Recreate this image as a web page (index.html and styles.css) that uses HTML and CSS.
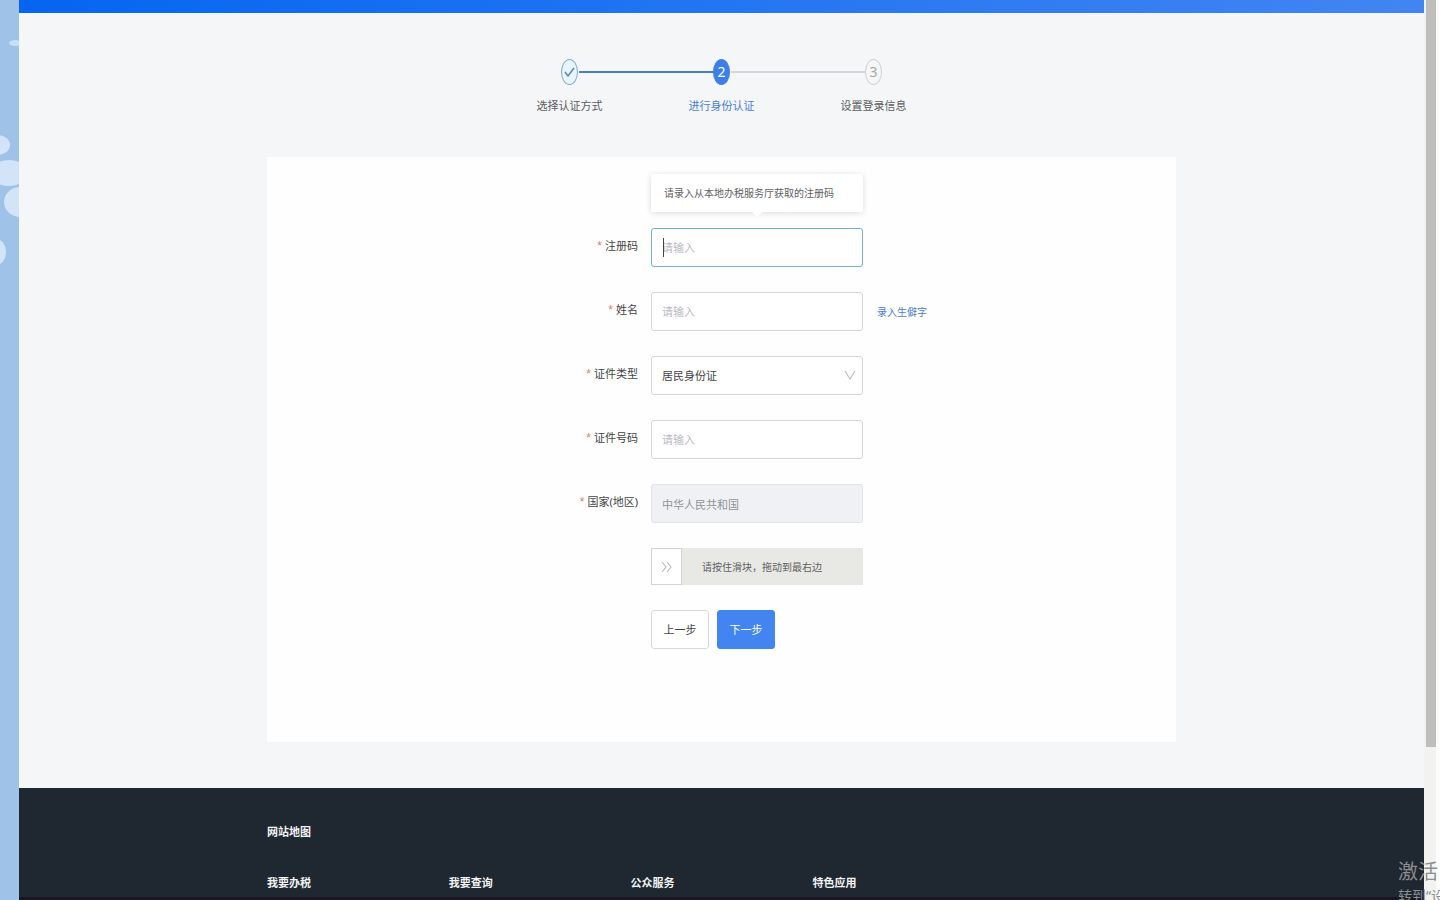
FILE: index.html
```html
<!DOCTYPE html>
<html lang="zh-CN">
<head>
<meta charset="utf-8">
<title>进行身份认证</title>
<link rel="stylesheet" href="styles.css">
</head>
<body>
<div class="shell">
  <aside class="desktop" aria-hidden="true">
    <svg class="petals" width="19" height="290" viewBox="0 0 19 290">
      <ellipse cx="15" cy="43" rx="6" ry="3" fill="#c6e1f7"/>
      <g fill="#d3e4f8">
        <ellipse cx="-2" cy="145" rx="12" ry="10"/>
        <ellipse cx="9" cy="173" rx="19" ry="13"/>
        <ellipse cx="20" cy="202" rx="16" ry="15"/>
        <ellipse cx="-4" cy="252" rx="10" ry="13"/>
      </g>
    </svg>
  </aside>

  <div class="page">
    <header class="topbar"></header>
    <main class="main">
      <ol class="steps">
        <li class="step done">
          <span class="dot"><svg width="11" height="14" viewBox="0 0 11 14"><path d="M1 7l3 4 6-8" fill="none" stroke="#5c86c0" stroke-width="1.6"/></svg></span>
          <span class="step-name">选择认证方式</span>
        </li>
        <li class="step current">
          <span class="dot">2</span>
          <span class="step-name">进行身份认证</span>
        </li>
        <li class="step">
          <span class="dot">3</span>
          <span class="step-name">设置登录信息</span>
        </li>
      </ol>

      <form class="card">
        <div class="row">
          <label class="label" for="code">注册码</label>
          <div class="field focused">
            <input class="control" id="code" type="text" placeholder="请输入">
            <div class="tip" role="tooltip">请录入从本地办税服务厅获取的注册码</div>
          </div>
        </div>
        <div class="row">
          <label class="label" for="name">姓名</label>
          <div class="field"><input class="control" id="name" type="text" placeholder="请输入"></div>
          <a class="rare" href="#">录入生僻字</a>
        </div>
        <div class="row">
          <label class="label" for="type">证件类型</label>
          <div class="field">
            <select class="control" id="type"><option>居民身份证</option></select>
            <svg class="chevron" width="12" height="10" viewBox="0 0 12 10"><path d="M1 1l5 8 5-8" fill="none" stroke="#c4c4c6" stroke-width="1.3"/></svg>
          </div>
        </div>
        <div class="row">
          <label class="label" for="number">证件号码</label>
          <div class="field"><input class="control" id="number" type="text" placeholder="请输入"></div>
        </div>
        <div class="row">
          <label class="label" for="country">国家(地区)</label>
          <div class="field"><input class="control" id="country" type="text" value="中华人民共和国" disabled></div>
        </div>
        <div class="row">
          <div class="slider">
            <button class="handle" type="button" aria-label="滑块"><svg width="12" height="14" viewBox="0 0 12 14"><path d="M1 2l4 5-4 5M6 2l4 5-4 5" fill="none" stroke="#b9b9b9" stroke-width="1.1"/></svg></button>
            <span class="slider-text">请按住滑块，拖动到最右边</span>
          </div>
        </div>
        <div class="row">
          <div class="actions">
            <button class="btn" type="button">上一步</button>
            <button class="btn primary" type="submit">下一步</button>
          </div>
        </div>
      </form>
    </main>

    <footer class="footer">
      <div class="sitemap">
        <h2 class="heading">网站地图</h2>
        <nav class="links">
          <h3 class="heading">我要办税</h3>
          <h3 class="heading">我要查询</h3>
          <h3 class="heading">公众服务</h3>
          <h3 class="heading">特色应用</h3>
        </nav>
      </div>
    </footer>
  </div>

  <div class="scrollbar" aria-hidden="true"><div class="thumb"></div></div>
  <div class="watermark"><p class="wm-title">激活</p><p class="wm-note">转到“设</p></div>
</div>
</body>
</html>
```
FILE: styles.css
```css
* { box-sizing: border-box; }

body {
  margin: 0;
  font-family: "Noto Sans", "Noto Sans CJK SC", sans-serif;
  font-size: 11px;
  line-height: 16px;
  color: #444;
}

button, input, select { font: inherit; color: inherit; }

.shell {
  position: relative;
  display: flex;
  height: 100vh;
  overflow: hidden;
}

.desktop { flex: 0 0 19px; background: #9fc2e8; overflow: hidden; }
.petals { display: block; }

.page { flex: 1; display: flex; flex-direction: column; background: #f4f6f8; }

.topbar {
  flex: 0 0 13px;
  background: linear-gradient(90deg, #0565f1, #4285f2);
}

.main {
  display: flex;
  flex-direction: column;
  align-items: center;
  padding: 46px 24px;
}

/* Progress steps */
.steps { display: flex; margin: 0 0 43px; padding: 0; list-style: none; }

.step {
  position: relative;
  display: flex;
  flex-direction: column;
  align-items: center;
  gap: 13px;
  width: 152px;
}

.step + .step::before {
  content: "";
  position: absolute;
  top: 12px;
  right: 84px;
  width: 135px;
  height: 2px;
  background: #d2d4da;
}

.step.current::before { background: #4a7fcb; }

.dot {
  display: flex;
  align-items: center;
  justify-content: center;
  width: 17px;
  height: 26px;
  border: 1px solid #d0d1d4;
  border-radius: 50%;
  font-size: 14px;
  color: #a5a6a8;
}

.done .dot { border-color: #82a9d5; background: #e9f4ff; }
.current .dot { border-color: #3d7fe8; background: #3d7fe8; color: #fff; }
.step-name { color: #5b5c5e; }
.current .step-name { color: #4a7ddd; }

/* Form card */
.card {
  display: flex;
  flex-direction: column;
  gap: 25px;
  width: 100%;
  max-width: 909px;
  padding: 71px 0 93px;
  background: #fefefe;
}

.row {
  display: grid;
  grid-template-columns: 371px 212px auto;
  column-gap: 13px;
  align-items: center;
  justify-content: start;
}

.label { padding-bottom: 4px; text-align: right; }
.label::before {
  content: "*";
  margin-right: 3px;
  font-family: "Liberation Sans", sans-serif;
  font-size: 12px;
  color: #e07b72;
}

.field { position: relative; }

.control {
  display: block;
  width: 100%;
  height: 39px;
  padding: 0 10px;
  border: 1px solid #d5d6da;
  border-radius: 3px;
  background: #fff;
  outline: none;
  appearance: none;
}

.control::placeholder { color: #b9bac2; opacity: 1; }
.control:disabled { background: #f0f1f4; border-color: #e2e3e6; color: #929396; }
.focused .control { border-color: #72aed6; }

.focused::after {
  content: "";
  position: absolute;
  top: 10px;
  left: 12px;
  width: 1px;
  height: 19px;
  background: #444;
}

.tip {
  position: absolute;
  bottom: 55px;
  left: 0;
  width: 100%;
  padding: 11px 13px;
  border-radius: 2px;
  background: #fff;
  box-shadow: 0 1px 6px rgba(0, 0, 0, 0.14);
  font-size: 10px;
  color: #606163;
  white-space: nowrap;
}

.tip::after {
  content: "";
  position: absolute;
  top: 100%;
  left: 50%;
  margin-left: -5px;
  border: 5px solid transparent;
  border-top-color: #fff;
}

.rare { padding-left: 1px; font-size: 10px; color: #4a7dd6; text-decoration: none; }
.chevron { position: absolute; top: 14px; right: 7px; pointer-events: none; }

.slider {
  grid-column: 2;
  display: flex;
  align-items: center;
  height: 37px;
  background: #e8e8e5;
}

.handle {
  display: flex;
  align-items: center;
  justify-content: center;
  width: 31px;
  height: 37px;
  padding: 0;
  border: 1px solid #d3d3d2;
  background: #fff;
}

.slider-text { padding-left: 20px; font-size: 10px; color: #606060; }

.actions { grid-column: 2; display: flex; gap: 8px; }

.btn {
  width: 58px;
  height: 39px;
  padding: 0;
  border: 1px solid #d8d9dc;
  border-radius: 3px;
  background: #fff;
}

.btn.primary { border-color: #4285f0; background: #4285f0; color: #fff; }

/* Footer */
.footer {
  flex: 1;
  padding: 36px 24px 0;
  border-bottom: 3px solid #191522;
  background: #1f2730;
}

.sitemap { max-width: 909px; margin: 0 auto; }
.heading { margin: 0; font-size: 11px; font-weight: 700; color: #f2f3f4; }
.links { display: grid; grid-template-columns: repeat(5, 1fr); margin-top: 35px; }

/* Window edge */
.scrollbar {
  flex: 0 0 16px;
  padding: 0 4px 0 2px;
  background: linear-gradient(90deg, #f2f2f0 12px, #fcfcfc 12px);
}

.thumb { height: 83%; background: #bebebd; }

.watermark {
  position: absolute;
  top: 860px;
  left: calc(100% - 42px);
  color: #8b8e91;
  white-space: nowrap;
}

.watermark p { margin: 0; }
.wm-title { font-size: 20px; line-height: 24px; }
.wm-note { font-size: 14px; line-height: 24px; }
```
